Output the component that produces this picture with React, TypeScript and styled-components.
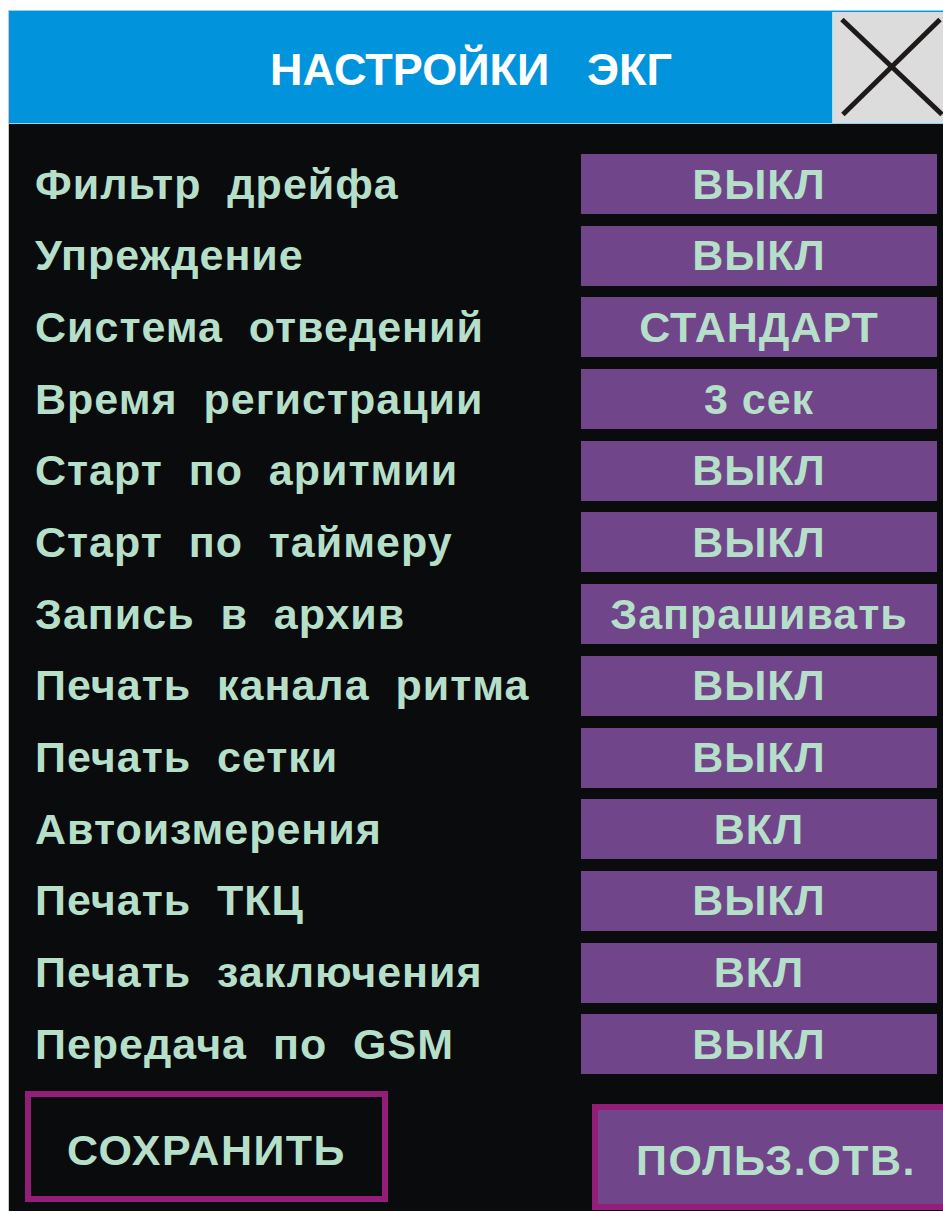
import { createGlobalStyle } from 'styled-components';
import styled from 'styled-components';

const GlobalStyle = createGlobalStyle`
  html, body {
    margin: 0;
    padding: 0;
    background: #ffffff;
    overflow: hidden;
  }
  body {
    font-family: 'Liberation Sans', Arial, sans-serif;
  }
`;

type Setting = { label: string; value: string };

const settings: Setting[] = [
  { label: 'Фильтр  дрейфа', value: 'ВЫКЛ' },
  { label: 'Упреждение', value: 'ВЫКЛ' },
  { label: 'Система  отведений', value: 'СТАНДАРТ' },
  { label: 'Время  регистрации', value: '3 сек' },
  { label: 'Старт  по  аритмии', value: 'ВЫКЛ' },
  { label: 'Старт  по  таймеру', value: 'ВЫКЛ' },
  { label: 'Запись  в  архив', value: 'Запрашивать' },
  { label: 'Печать  канала  ритма', value: 'ВЫКЛ' },
  { label: 'Печать  сетки', value: 'ВЫКЛ' },
  { label: 'Автоизмерения', value: 'ВКЛ' },
  { label: 'Печать  ТКЦ', value: 'ВЫКЛ' },
  { label: 'Печать  заключения', value: 'ВКЛ' },
  { label: 'Передача  по  GSM', value: 'ВЫКЛ' },
];

const Screen = styled.div`
  margin: 10px 0 0 8px;
  height: calc(100vh - 10px);
  display: flex;
  flex-direction: column;
  background: #0a0b0d;
  border-left: 1px solid #c9c9c9;
  overflow: hidden;
`;

const TitleBar = styled.header`
  display: flex;
  height: 114px;
  box-sizing: border-box;
  background: #0194dc;
  border-top: 1px solid #90d2f2;
  border-bottom: 1px solid #90d2f2;
`;

const Title = styled.h1`
  flex: 1;
  margin: 0;
  /* balances the close button so the caption is centred on the whole bar */
  padding: 6px 0 0 101px;
  display: flex;
  align-items: center;
  justify-content: center;
  color: #ffffff;
  font-size: 45px;
  font-weight: 700;
  white-space: pre;
`;

const CloseButton = styled.button`
  width: 111px;
  margin-top: 1px;
  padding: 0;
  border: none;
  border-left: 1px solid #a6dcf4;
  background: #dcdcdc;
  display: flex;
  align-items: center;
  justify-content: center;
  cursor: pointer;
`;

const Rows = styled.div`
  display: flex;
  flex-direction: column;
  gap: 11.7px;
  padding: 30px 6px 0 26px;
`;

const Row = styled.div`
  display: grid;
  grid-template-columns: 1fr 356px;
  align-items: center;
  height: 60px;
`;

const Label = styled.span`
  color: #b5dfc9;
  font-size: 43px;
  font-weight: 700;
  letter-spacing: 1px;
  white-space: pre;
`;

const Value = styled.div`
  height: 60px;
  display: flex;
  align-items: center;
  justify-content: center;
  background: #70458a;
  color: #b5dfc9;
  font-size: 43px;
  font-weight: 700;
  letter-spacing: 1px;
  white-space: pre;
`;

const Footer = styled.div`
  display: flex;
  justify-content: space-between;
  align-items: flex-start;
  padding: 17px 0 0 16px;
`;

const ActionButton = styled.button<{ $filled?: boolean }>`
  box-sizing: border-box;
  width: ${(p) => (p.$filled ? '368px' : '363px')};
  height: ${(p) => (p.$filled ? '106px' : '111px')};
  margin-top: ${(p) => (p.$filled ? '13px' : '0')};
  margin-right: ${(p) => (p.$filled ? '-17px' : '0')};
  padding: ${(p) => (p.$filled ? '6px 0 0' : '8px 0 0')};
  border: 6px solid #921e78;
  background: ${(p) => (p.$filled ? '#70458a' : '#0a0b0d')};
  color: #b5dfc9;
  font-family: 'Liberation Sans', Arial, sans-serif;
  font-size: 43px;
  font-weight: 700;
  letter-spacing: 1.5px;
  cursor: pointer;
`;

const CrossIcon = () => (
  <svg width="111" height="111" viewBox="0 0 111 111">
    <g stroke="#1e1a1a" strokeWidth="5" strokeLinecap="butt">
      <line x1="9" y1="7" x2="110" y2="103" />
      <line x1="108" y1="7" x2="10" y2="103" />
    </g>
  </svg>
);

export default function App() {
  return (
    <>
      <GlobalStyle />
      <Screen>
        <TitleBar>
          <Title>{'НАСТРОЙКИ   ЭКГ'}</Title>
          <CloseButton aria-label="Закрыть">
            <CrossIcon />
          </CloseButton>
        </TitleBar>
        <Rows>
          {settings.map((s) => (
            <Row key={s.label}>
              <Label>{s.label}</Label>
              <Value>{s.value}</Value>
            </Row>
          ))}
        </Rows>
        <Footer>
          <ActionButton>СОХРАНИТЬ</ActionButton>
          <ActionButton $filled>ПОЛЬЗ.ОТВ.</ActionButton>
        </Footer>
      </Screen>
    </>
  );
}
